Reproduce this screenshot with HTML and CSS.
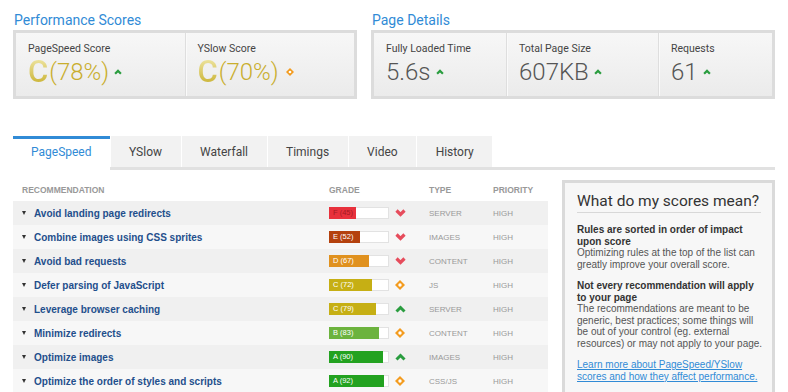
FILE: index.html
```html
<!DOCTYPE html>
<html lang="en">
<head>
  <meta charset="UTF-8" />
  <meta name="viewport" content="width=device-width, initial-scale=1.0"/>
  <title>Performance Report</title>
  <link rel="stylesheet" href="styles.css">
</head>
<body>
  <svg class="icon-defs" aria-hidden="true">
    <symbol id="ico-up" viewBox="0 0 11 8">
      <polyline points="1.5,6.5 5.5,2.5 9.5,6.5" fill="none" stroke="currentColor" stroke-width="3"/>
    </symbol>
    <symbol id="ico-down" viewBox="0 0 11 8">
      <polyline points="1.5,1.5 5.5,5.5 9.5,1.5" fill="none" stroke="currentColor" stroke-width="3.2"/>
    </symbol>
    <symbol id="ico-flat" viewBox="0 0 10 10">
      <path d="M5 0 L10 5 L5 10 L0 5 Z" fill="currentColor"/>
      <circle cx="5" cy="5" r="1.7" fill="#fff"/>
    </symbol>
  </svg>

  <div class="summary">
    <section class="summary-block scores">
      <h2>Performance Scores</h2>
      <div class="summary-box">
        <div class="summary-item">
          <div class="summary-label">PageSpeed Score</div>
          <div class="summary-value">
            <span class="letter">C</span><span class="pct">(78%)</span>
            <svg class="trend up"><use href="#ico-up"/></svg>
          </div>
        </div>
        <div class="summary-item">
          <div class="summary-label">YSlow Score</div>
          <div class="summary-value">
            <span class="letter">C</span><span class="pct">(70%)</span>
            <svg class="trend flat"><use href="#ico-flat"/></svg>
          </div>
        </div>
      </div>
    </section>

    <section class="summary-block details">
      <h2>Page Details</h2>
      <div class="summary-box">
        <div class="summary-item item-time">
          <div class="summary-label">Fully Loaded Time</div>
          <div class="summary-value">5.6s <svg class="trend up"><use href="#ico-up"/></svg></div>
        </div>
        <div class="summary-item item-size">
          <div class="summary-label">Total Page Size</div>
          <div class="summary-value">607KB <svg class="trend up"><use href="#ico-up"/></svg></div>
        </div>
        <div class="summary-item">
          <div class="summary-label">Requests</div>
          <div class="summary-value">61 <svg class="trend up"><use href="#ico-up"/></svg></div>
        </div>
      </div>
    </section>
  </div>

  <nav class="tabs">
    <div class="tab active">PageSpeed</div>
    <div class="tab">YSlow</div>
    <div class="tab">Waterfall</div>
    <div class="tab">Timings</div>
    <div class="tab">Video</div>
    <div class="tab">History</div>
  </nav>

  <div class="report">
    <div class="recs">
      <div class="recs-head">
        <span>RECOMMENDATION</span>
        <span>GRADE</span>
        <span></span>
        <span>TYPE</span>
        <span>PRIORITY</span>
      </div>
      <div class="rec-list">
        <div class="rec">
          <span class="rec-title">Avoid landing page redirects</span>
          <div class="grade-bar"><div class="grade-fill grade-f" style="width:45%">F (45)</div></div>
          <svg class="rec-icon down"><use href="#ico-down"/></svg>
          <span class="rec-cell">SERVER</span>
          <span class="rec-cell">HIGH</span>
        </div>
        <div class="rec">
          <span class="rec-title">Combine images using CSS sprites</span>
          <div class="grade-bar"><div class="grade-fill grade-e" style="width:52%">E (52)</div></div>
          <svg class="rec-icon down"><use href="#ico-down"/></svg>
          <span class="rec-cell">IMAGES</span>
          <span class="rec-cell">HIGH</span>
        </div>
        <div class="rec">
          <span class="rec-title">Avoid bad requests</span>
          <div class="grade-bar"><div class="grade-fill grade-d" style="width:67%">D (67)</div></div>
          <svg class="rec-icon down"><use href="#ico-down"/></svg>
          <span class="rec-cell">CONTENT</span>
          <span class="rec-cell">HIGH</span>
        </div>
        <div class="rec">
          <span class="rec-title">Defer parsing of JavaScript</span>
          <div class="grade-bar"><div class="grade-fill grade-c" style="width:72%">C (72)</div></div>
          <svg class="rec-icon flat"><use href="#ico-flat"/></svg>
          <span class="rec-cell">JS</span>
          <span class="rec-cell">HIGH</span>
        </div>
        <div class="rec">
          <span class="rec-title">Leverage browser caching</span>
          <div class="grade-bar"><div class="grade-fill grade-c" style="width:79%">C (79)</div></div>
          <svg class="rec-icon up"><use href="#ico-up"/></svg>
          <span class="rec-cell">SERVER</span>
          <span class="rec-cell">HIGH</span>
        </div>
        <div class="rec">
          <span class="rec-title">Minimize redirects</span>
          <div class="grade-bar"><div class="grade-fill grade-b" style="width:83%">B (83)</div></div>
          <svg class="rec-icon flat"><use href="#ico-flat"/></svg>
          <span class="rec-cell">CONTENT</span>
          <span class="rec-cell">HIGH</span>
        </div>
        <div class="rec">
          <span class="rec-title">Optimize images</span>
          <div class="grade-bar"><div class="grade-fill grade-a" style="width:90%">A (90)</div></div>
          <svg class="rec-icon up"><use href="#ico-up"/></svg>
          <span class="rec-cell">IMAGES</span>
          <span class="rec-cell">HIGH</span>
        </div>
        <div class="rec">
          <span class="rec-title">Optimize the order of styles and scripts</span>
          <div class="grade-bar"><div class="grade-fill grade-a" style="width:92%">A (92)</div></div>
          <svg class="rec-icon flat"><use href="#ico-flat"/></svg>
          <span class="rec-cell">CSS/JS</span>
          <span class="rec-cell">HIGH</span>
        </div>
      </div>
    </div>

    <aside class="panel">
      <h3>What do my scores mean?</h3>
      <p>
        <strong>Rules are sorted in order of impact upon score</strong>
        Optimizing rules at the top of the list can greatly improve your overall score.
      </p>
      <p>
        <strong>Not every recommendation will apply to your page</strong>
        The recommendations are meant to be generic, best practices; some things will be out of your control (eg. external resources) or may not apply to your page.
      </p>
      <p>
        <a href="#">Learn more about PageSpeed/YSlow scores and how they affect performance.</a>
      </p>
    </aside>
  </div>
</body>
</html>
```

FILE: styles.css
```css
html, body {
  overflow: hidden;
}

body {
  margin: 0;
  padding: 12px 13px 0;
  font-family: "Liberation Sans", Arial, sans-serif;
  background: #fff;
  color: #333;
}

.icon-defs {
  display: none;
}

/* summary boxes */
.summary {
  display: flex;
  gap: 14px;
}

.summary-block.scores {
  width: 344px;
}

.summary-block.details {
  flex: 1;
}

h2 {
  font-family: Roboto, "Noto Sans", sans-serif;
  font-weight: 400;
  font-size: 14px;
  line-height: 16px;
  color: #318bd6;
  margin: 0 0 2px 1px;
}

.summary-box {
  display: flex;
  height: 63px;
  border: 3px solid #dcdcdc;
  background: linear-gradient(#f7f7f7, #ebebeb);
}

.summary-item {
  flex: 1;
  padding: 9px 0 0 12px;
}

.summary-item + .summary-item {
  border-left: 1px solid #dedede;
  box-shadow: inset 1px 0 #fafafa;
}

.summary-item.item-time {
  flex: 0 0 120px;
}

.summary-item.item-size {
  flex: 0 0 139px;
}

.summary-label {
  font-family: Roboto, "Noto Sans", sans-serif;
  font-size: 10.5px;
  line-height: 14px;
  color: #444;
}

.summary-value {
  display: flex;
  align-items: center;
  height: 28px;
  margin-top: 2px;
  font-family: Roboto, "Noto Sans", sans-serif;
  font-weight: 300;
  font-size: 24px;
  line-height: 28px;
  color: #555;
}

.summary-value .letter {
  font-size: 31px;
  font-weight: 500;
  margin-right: 1px;
  background: linear-gradient(#eee5a3, #c8b02c);
  -webkit-background-clip: text;
  background-clip: text;
  color: transparent;
}

.summary-value .pct {
  color: #c9ae2e;
}

.trend {
  width: 8px;
  height: 6px;
  margin-left: 5px;
}

.trend.up {
  color: #2a9d3f;
}

.trend.flat {
  width: 8px;
  height: 8px;
  margin-left: 7px;
  color: #f39b1e;
}

/* tabs */
.tabs {
  display: flex;
  align-items: flex-start;
  margin-top: 37px;
  border-bottom: 3px solid #e1e1e1;
  font-family: Roboto, "Noto Sans", sans-serif;
  font-size: 12px;
}

.tab {
  height: 31px;
  line-height: 32px;
  padding: 0 18.5px;
  margin-left: 1px;
  background: #f2f2f2;
  color: #444;
}

.tab.active {
  height: 28px;
  line-height: 26px;
  margin: 0 0 -3px;
  padding: 0 18px;
  border-top: 3px solid #318bd6;
  border-bottom: 3px solid #fff;
  background: #fff;
  color: #318bd6;
}

/* recommendations */
.report {
  display: flex;
  align-items: flex-start;
  gap: 14px;
}

.recs {
  width: 535px;
  margin-top: 14px;
}

.recs-head,
.rec {
  display: grid;
  grid-template-columns: 307px 66px 34px 64px 1fr;
  align-items: center;
  padding-left: 9px;
}

.recs-head {
  height: 12px;
  margin-bottom: 5px;
  font-size: 8.5px;
  font-weight: bold;
  color: #999;
}

.rec {
  height: 24px;
  background: #f0f0f0;
}

.rec:nth-child(even) {
  background: #f7f7f7;
}

.rec-title {
  display: flex;
  align-items: center;
  font-size: 10px;
  font-weight: bold;
  color: #1f4f8c;
}

.rec-title::before {
  content: "";
  border-left: 2.5px solid transparent;
  border-right: 2.5px solid transparent;
  border-top: 4px solid #333;
  margin-right: 8px;
}

.grade-bar {
  display: flex;
  width: 60px;
  height: 12px;
  background: #fff;
  box-shadow: inset 0 0 0 1px #e2e2e2;
}

.grade-fill {
  height: 12px;
  padding-left: 4px;
  box-sizing: border-box;
  font-size: 7.5px;
  line-height: 12px;
  color: #fff;
  white-space: nowrap;
}

.grade-f { background: #e8313c; color: #a31a22; }
.grade-e { background: #b4410e; }
.grade-d { background: #e0911e; }
.grade-c { background: #c6af14; }
.grade-b { background: #6cb33e; }
.grade-a { background: #23a220; }

.rec-icon {
  width: 11px;
  height: 8px;
}

.rec-icon.down { color: #e64c5c; }
.rec-icon.up { color: #2a9d3f; }

.rec-icon.flat {
  width: 10px;
  height: 10px;
  color: #f39b1e;
}

.rec-cell {
  font-size: 8px;
  color: #999;
}

/* side panel */
.panel {
  flex: 1;
  margin-top: 10px;
  padding: 9px 8px 30px 12px;
  border: 3px solid #dadada;
  background: #f7f7f7;
}

.panel h3 {
  margin: 0 3px 0 0;
  padding-bottom: 2px;
  border-bottom: 1px solid #d8d8d8;
  font-family: Roboto, "Noto Sans", sans-serif;
  font-weight: 400;
  font-size: 15.5px;
  line-height: 18px;
  color: #333;
}

.panel p {
  margin: 10px 0 0;
  font-size: 10px;
  line-height: 11.5px;
  color: #555;
}

.panel h3 + p {
  margin-top: 11px;
}

.panel strong {
  display: block;
  color: #333;
}

.panel a {
  color: #318bd6;
}
```
